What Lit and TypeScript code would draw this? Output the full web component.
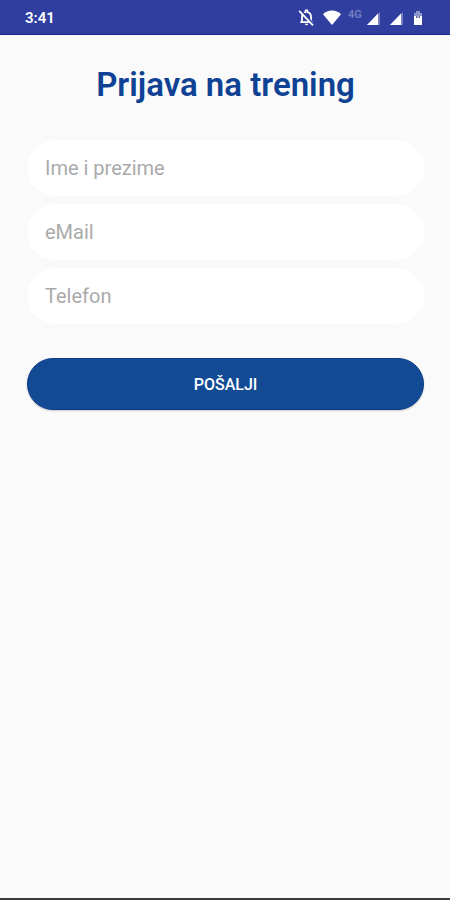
import { LitElement, html, css } from "lit";
import { customElement } from "lit/decorators.js";

@customElement("status-bar")
class StatusBar extends LitElement {
  static styles = css`
    :host {
      display: flex;
      align-items: center;
      justify-content: space-between;
      box-sizing: border-box;
      height: 35px;
      padding: 2px 27px 0 25px;
      background: #303f9f;
      border-bottom: 1px solid #10278c;
      color: #fff;
      font: 600 15px/20px Roboto, sans-serif;
    }
    .icons {
      display: flex;
      align-items: center;
    }
    .wifi {
      margin-left: 7px;
    }
    .network {
      width: 16px;
      margin: 0 2px 6px 6px;
      font-size: 11px;
      line-height: 12px;
      color: #7480c2;
    }
    .signal + .signal {
      margin-left: 8px;
    }
    .battery {
      margin-left: 9px;
    }
    svg {
      display: block;
      fill: #fff;
    }
  `;

  signal() {
    return html`<svg class="signal" width="15" height="15" viewBox="0 0 15 15" aria-hidden="true">
      <path d="M14 1v13H1z" fill="#7480c2" />
      <path d="M12 2.500V14H1z" />
    </svg>`;
  }

  render() {
    return html`
      <span>3:41</span>
      <div class="icons">
        <svg width="17" height="18" viewBox="0 0 17 18" aria-hidden="true">
          <path
            d="M4 13.200V8C4 5.500 5.400 3.700 7.400 3.200V2.300a1.100 1.100 0 0 1 2.200 0v.9c2 .5 3.400 2.300 3.400 4.800v5.200M2.300 13.200h12.400"
            fill="none"
            stroke="#fff"
            stroke-width="1.8"
          />
          <path d="M7 14.800h3a1.500 1.500 0 0 1-3 0z" />
          <path d="M2.600 1.300l13.600 14.600" stroke="#303f9f" stroke-width="2" />
          <path d="M1.200 1.900l13.800 14.400" stroke="#fff" stroke-width="1.800" />
        </svg>
        <svg class="wifi" width="20" height="18" viewBox="0 0 20 18" aria-hidden="true">
          <path d="M10 16L1 5.200C3.500 2.800 6.600 1.500 10 1.500s6.500 1.300 9 3.700z" />
        </svg>
        <span class="network">4G</span>
        ${this.signal()} ${this.signal()}
        <svg class="battery" width="10" height="16" viewBox="0 0 10 16" aria-hidden="true">
          <path d="M3 1h4v2h2v12H1V3h2z" fill="#8d97cd" />
          <path d="M1 6h8v9H1z" />
          <path d="M3 6h1.500v2H3zM5.500 6H7v2H5.500z" fill="#59629a" />
        </svg>
      </div>
    `;
  }
}

@customElement("app-root")
class AppRoot extends LitElement {
  static styles = css`
    :host {
      display: flex;
      flex-direction: column;
      box-sizing: border-box;
      min-height: 100vh;
      background: #fafafa;
      border-bottom: 2px solid #3a3a3e;
      font-family: Roboto, sans-serif;
    }
    form {
      display: flex;
      flex-direction: column;
      padding: 30px 26px 30px 27px;
    }
    h1 {
      margin: 0 0 35px;
      color: #0f4294;
      font-size: 33px;
      line-height: 40px;
      font-weight: 600;
      text-align: center;
    }
    .fields {
      display: grid;
      gap: 8px;
      margin-bottom: 34px;
    }
    input {
      box-sizing: border-box;
      width: 100%;
      height: 56px;
      padding: 0 18px;
      border: 0;
      border-radius: 28px;
      background: #fff;
      color: #222;
      font: 400 20px/24px Roboto, sans-serif;
    }
    input::placeholder {
      color: #aaa;
      opacity: 1;
    }
    button {
      height: 52px;
      padding: 2px 0 0;
      border: 1px solid #0b3d8c;
      border-radius: 26px;
      background: #124b94;
      box-shadow: 0 1px 2px #0003;
      color: #fff;
      font: 500 16px/20px Roboto, sans-serif;
      text-transform: uppercase;
    }
  `;

  render() {
    return html`
      <status-bar></status-bar>
      <form @submit=${(e: Event) => e.preventDefault()}>
        <h1>Prijava na trening</h1>
        <div class="fields">
          <input type="text" name="name" aria-label="Ime i prezime" placeholder="Ime i prezime" />
          <input type="email" name="email" aria-label="eMail" placeholder="eMail" />
          <input type="tel" name="phone" aria-label="Telefon" placeholder="Telefon" />
        </div>
        <button type="submit">Pošalji</button>
      </form>
    `;
  }
}
